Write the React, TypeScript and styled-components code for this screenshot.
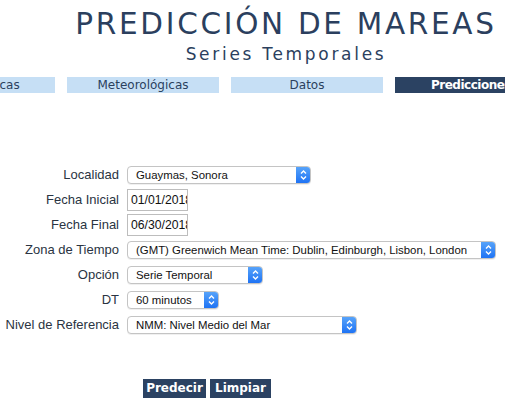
import React from "react";
import styled, { createGlobalStyle } from "styled-components";

const Global = createGlobalStyle`
  html, body { margin: 0; padding: 0; background: #fff; overflow: hidden; }
  body { width: 505px; height: 405px; font-family: "Liberation Sans", Arial, sans-serif; }
`;

const Page = styled.div`
  width: 505px;
  height: 405px;
  overflow: hidden;
`;

const Header = styled.header`
  width: 572px;
  padding-top: 7px;
  text-align: center;
  color: #2b3f5e;
  font-family: "DejaVu Sans", Verdana, sans-serif;
`;

const Title = styled.h1`
  margin: 0;
  font-weight: normal;
  font-size: 29.5px;
  line-height: 34px;
  letter-spacing: 2.7px;
`;

const Subtitle = styled.h2`
  margin: 3px 0 0;
  font-weight: normal;
  font-size: 17px;
  line-height: 20px;
  letter-spacing: 2.7px;
`;

const Tabs = styled.nav`
  display: flex;
  gap: 12px;
  margin-left: -97px;
  margin-top: 13px;
`;

const Tab = styled.div<{ $active?: boolean }>`
  flex: 0 0 152px;
  height: 16px;
  line-height: 16px;
  text-align: center;
  font-family: "DejaVu Sans", Verdana, sans-serif;
  font-size: 12px;
  white-space: nowrap;
  background: ${(p) => (p.$active ? "#2b4262" : "#c6dff5")};
  color: ${(p) => (p.$active ? "#fff" : "#2b3f5e")};
  font-weight: ${(p) => (p.$active ? "bold" : "normal")};
  letter-spacing: ${(p) => (p.$active ? "-0.5px" : "0")};
`;

const Form = styled.div`
  display: grid;
  grid-template-columns: 119px auto;
  grid-auto-rows: 25px;
  column-gap: 8px;
  align-items: center;
  justify-items: start;
  margin-top: 69px;
`;

const Label = styled.label`
  justify-self: end;
  font-size: 13px;
  color: #2a3442;
  white-space: nowrap;
`;

const SelectBox = styled.div<{ $w: number }>`
  display: flex;
  width: ${(p) => p.$w}px;
  height: 18px;
  box-sizing: border-box;
  border: 1px solid #c4c4c4;
  border-radius: 4px;
  background: #fff;
  box-shadow: 0 1px 0 rgba(0, 0, 0, 0.06);
  overflow: hidden;
`;

const SelectText = styled.div`
  flex: 1;
  padding-left: 8px;
  font-size: 11.4px;
  line-height: 16px;
  color: #111;
  white-space: nowrap;
  overflow: hidden;
`;

const Stepper = styled.div`
  flex: 0 0 15px;
  display: flex;
  align-items: center;
  justify-content: center;
  background: linear-gradient(#5aa6fa, #1b70f4);
  margin: -1px -1px -1px 0;
`;

const TextInput = styled.div`
  width: 61px;
  height: 22px;
  box-sizing: border-box;
  border: 1px solid #bdbdbd;
  padding-left: 3px;
  font-size: 12.2px;
  line-height: 20px;
  color: #111;
  white-space: nowrap;
  overflow: hidden;
`;

const Buttons = styled.div`
  display: flex;
  gap: 4px;
  margin: 42px 0 0 143px;
`;

const Button = styled.button<{ $w: number }>`
  width: ${(p) => p.$w}px;
  height: 19px;
  padding: 0;
  border: none;
  background: #2b4262;
  color: #fff;
  font-family: "DejaVu Sans", Verdana, sans-serif;
  font-weight: bold;
  font-size: 12px;
  line-height: 19px;
`;

const Chevrons = () => (
  <svg width="9" height="12" viewBox="0 0 9 12">
    <path d="M2 4.5 L4.5 2 L7 4.5 M2 7.5 L4.5 10 L7 7.5" fill="none" stroke="#fff" strokeWidth="1.4" />
  </svg>
);

const Select = ({ w, value }: { w: number; value: string }) => (
  <SelectBox $w={w}>
    <SelectText>{value}</SelectText>
    <Stepper>
      <Chevrons />
    </Stepper>
  </SelectBox>
);

export default function App() {
  return (
    <Page>
      <Global />
      <Header>
        <Title>PREDICCIÓN DE MAREAS</Title>
        <Subtitle>Series Temporales</Subtitle>
      </Header>
      <Tabs>
        <Tab>Astronómicas</Tab>
        <Tab>Meteorológicas</Tab>
        <Tab>Datos</Tab>
        <Tab $active>Predicciones</Tab>
        <Tab>Mapas</Tab>
      </Tabs>
      <Form>
        <Label>Localidad</Label>
        <Select w={184} value="Guaymas, Sonora" />
        <Label>Fecha Inicial</Label>
        <TextInput>01/01/2018</TextInput>
        <Label>Fecha Final</Label>
        <TextInput>06/30/2018</TextInput>
        <Label>Zona de Tiempo</Label>
        <Select w={369} value="(GMT) Greenwich Mean Time: Dublin, Edinburgh, Lisbon, London" />
        <Label>Opción</Label>
        <Select w={136} value="Serie Temporal" />
        <Label>DT</Label>
        <Select w={92} value="60 minutos" />
        <Label>Nivel de Referencia</Label>
        <Select w={230} value="NMM: Nivel Medio del Mar" />
      </Form>
      <Buttons>
        <Button $w={63}>Predecir</Button>
        <Button $w={61}>Limpiar</Button>
      </Buttons>
    </Page>
  );
}
